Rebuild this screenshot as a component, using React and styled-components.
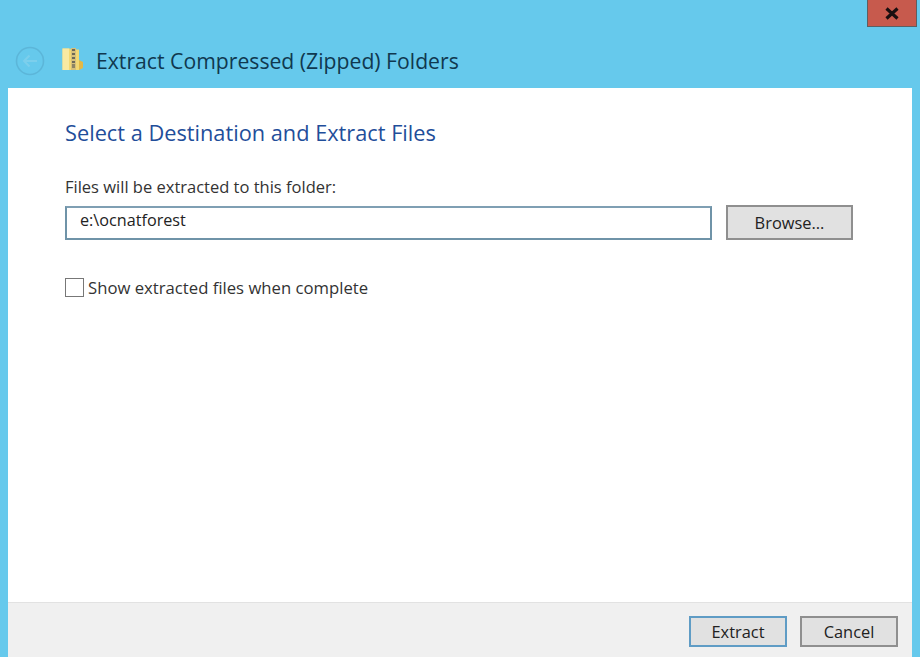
import React from 'react';
import styled, { createGlobalStyle } from 'styled-components';

const Global = createGlobalStyle`
  html, body { margin: 0; padding: 0; }
  body {
    font-family: "Open Sans", "Noto Sans", "Liberation Sans", sans-serif;
    background: #66c9ec;
  }
`;

const Frame = styled.div`
  width: 920px;
  height: 657px;
  display: flex;
  flex-direction: column;
  background: #66c9ec;
  overflow: hidden;
`;

const CaptionBar = styled.div`
  height: 27px;
  display: flex;
  justify-content: flex-end;
  padding-right: 3px;
`;

const CloseButton = styled.div`
  width: 48px;
  height: 26px;
  display: flex;
  align-items: center;
  justify-content: center;
  background: #c75a4d;
  border: 1px solid #5d5f62;
  border-top: 0;
`;

const TitleRow = styled.div`
  height: 61px;
  display: flex;
  align-items: center;
  padding: 7px 0 0 15px;
  box-sizing: border-box;
`;

const BackIcon = styled.svg`
  width: 30px;
  height: 30px;
  margin-right: 17px;
`;

const FolderIcon = styled.svg`
  width: 22px;
  height: 24px;
  margin-right: 12px;
  margin-top: -4px;
`;

const WindowTitle = styled.div`
  font-size: 21.2px;
  color: #10384f;
  white-space: nowrap;
  margin-top: -2px;
`;

const Panel = styled.div`
  flex: 1;
  margin: 0 8px;
  background: #fff;
  display: flex;
  flex-direction: column;
`;

const Body = styled.div`
  flex: 1;
  padding: 30px 59px 0 57px;
`;

const Heading = styled.h1`
  margin: 0 0 29px;
  font-size: 21.75px;
  line-height: 29px;
  font-weight: 400;
  color: #1f4e9a;
  white-space: nowrap;
`;

const FieldLabel = styled.div`
  font-size: 16.5px;
  line-height: 21px;
  color: #333;
  margin-bottom: 8px;
`;

const PathRow = styled.div`
  display: flex;
  align-items: center;
  gap: 14px;
`;

const PathBox = styled.div`
  flex: 1;
  height: 34px;
  box-sizing: border-box;
  border: 2px solid #6f93a8;
  border-top-color: #7f9fb3;
  padding: 0 0 5px 13px;
  display: flex;
  align-items: center;
  font-size: 16.2px;
  color: #222;
`;

const Button = styled.div`
  width: ${(p) => p.$width}px;
  height: ${(p) => p.$height}px;
  box-sizing: border-box;
  display: flex;
  align-items: center;
  justify-content: center;
  padding-bottom: 1px;
  background: #e1e1e1;
  border: 2px solid ${(p) => (p.$primary ? '#5f9cc5' : '#8f8f8f')};
  font-size: 16.4px;
  color: #222;
`;

const CheckRow = styled.div`
  display: flex;
  align-items: center;
  gap: 4px;
  margin-top: 37px;
`;

const CheckBox = styled.div`
  width: 19px;
  height: 19px;
  box-sizing: border-box;
  border: 1px solid #777;
  background: #fff;
`;

const CheckLabel = styled.div`
  font-size: 16.7px;
  line-height: 21px;
  color: #333;
`;

const Footer = styled.div`
  height: 55px;
  box-sizing: border-box;
  background: #f0f0f0;
  border-top: 1px solid #e2e2e2;
  display: flex;
  justify-content: flex-end;
  align-items: flex-start;
  gap: 13px;
  padding: 13px 14px 0 0;
`;

export default function App() {
  return (
    <Frame>
      <Global />
      <CaptionBar>
        <CloseButton>
          <svg width="16" height="13" viewBox="0 0 16 13">
            <path d="M2.5 1.5 L13.5 11.5 M13.5 1.5 L2.5 11.5" stroke="#1a0f10" strokeWidth="3.2" fill="none" />
          </svg>
        </CloseButton>
      </CaptionBar>
      <TitleRow>
        <BackIcon viewBox="0 0 30 30">
          <circle cx="15" cy="15" r="13.5" fill="none" stroke="#5cb6d9" strokeWidth="1.6" />
          <path d="M22 15 H9 M14.5 9.5 L9 15 L14.5 20.5" fill="none" stroke="#7ccfec" strokeWidth="2" />
        </BackIcon>
        <FolderIcon viewBox="0 0 22 24">
          <path d="M0.5 1.5 H8 L9 2.5 H17 V23 H0.5 Z" fill="#f2d873" />
          <path d="M0.5 1.5 H7 V23 H0.5 Z" fill="#f8e9a2" />
          <path d="M17 13 L21 15 V21 L17 23 Z" fill="#e3b846" />
          <path d="M9 1 H14 V23 H9 Z" fill="#d6c07a" />
          <path d="M10 2 H13 V4 H10 Z M10 6 H13 V8 H10 Z M10 10 H13 V12 H10 Z M10 14 H13 V16 H10 Z" fill="#6e6a58" />
          <path d="M10 17 H13 V21 H10 Z" fill="#8d8464" />
        </FolderIcon>
        <WindowTitle>Extract Compressed (Zipped) Folders</WindowTitle>
      </TitleRow>
      <Panel>
        <Body>
          <Heading>Select a Destination and Extract Files</Heading>
          <FieldLabel>Files will be extracted to this folder:</FieldLabel>
          <PathRow>
            <PathBox>e:\ocnatforest</PathBox>
            <Button $width={127} $height={35}>Browse...</Button>
          </PathRow>
          <CheckRow>
            <CheckBox />
            <CheckLabel>Show extracted files when complete</CheckLabel>
          </CheckRow>
        </Body>
        <Footer>
          <Button $primary $width={98} $height={31}>Extract</Button>
          <Button $width={98} $height={31}>Cancel</Button>
        </Footer>
      </Panel>
    </Frame>
  );
}
